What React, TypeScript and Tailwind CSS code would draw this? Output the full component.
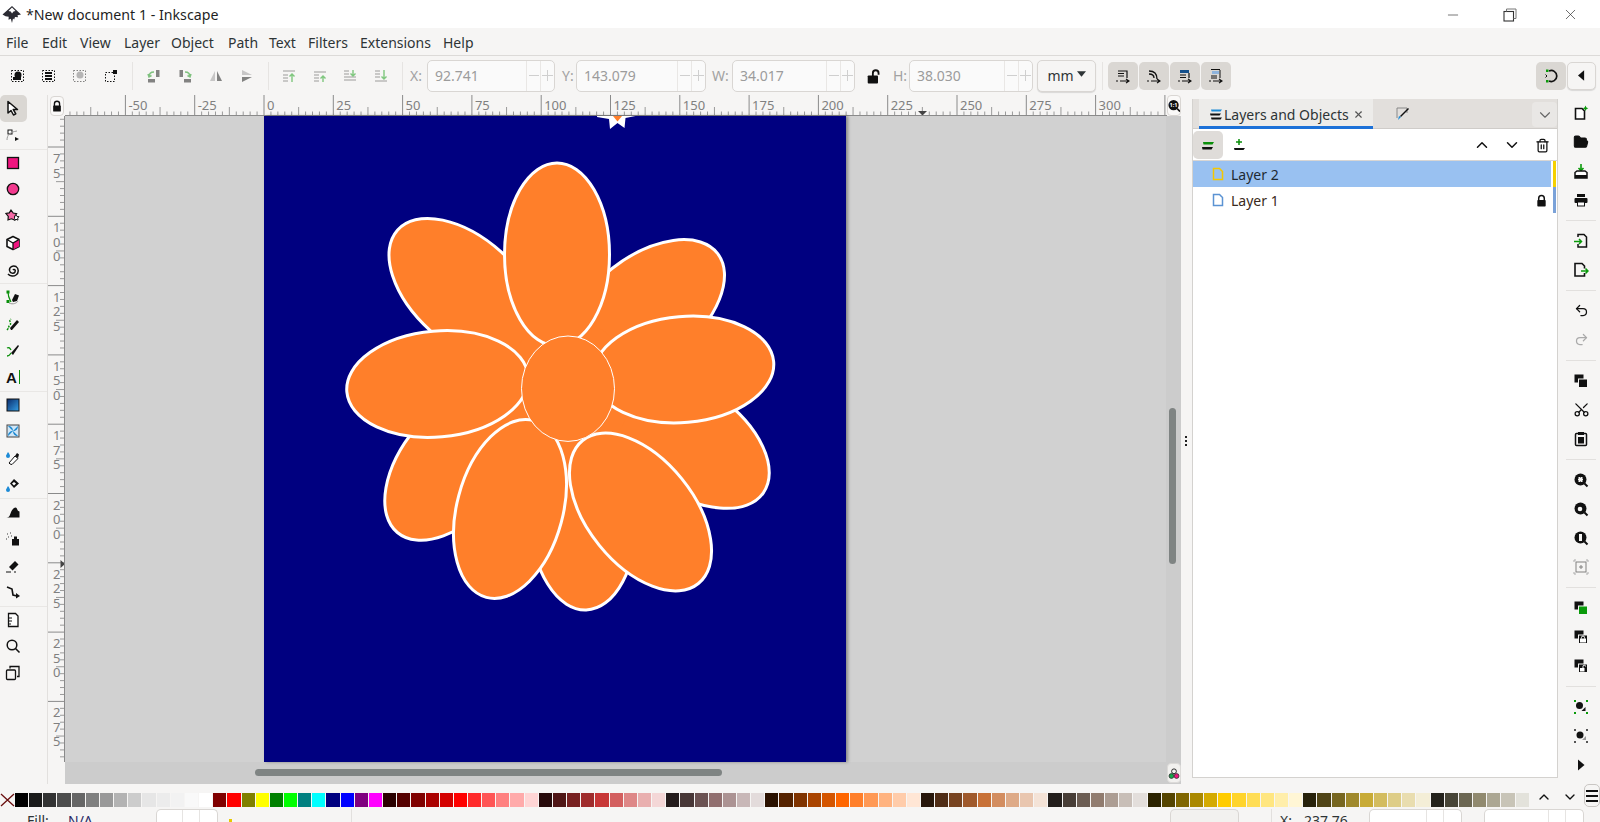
import type { ReactNode } from 'react'
import { Minus, X, ChevronDown, ChevronUp, Trash2, Scissors, Undo2, Redo2, FolderOpen } from 'lucide-react'

const FONT = "font-['Noto_Sans',sans-serif]"

const palette = [
  '000000', '1a1a1a', '333333', '4d4d4d', '666666', '808080', '999999', 'b3b3b3', 'cccccc', 'e6e6e6', 'ececec', 'f2f2f2', 'f9f9f9', 'ffffff',
  '800000', 'ff0000', '808000', 'ffff00', '008000', '00ff00', '008080', '00ffff', '000080', '0000ff', '800080', 'ff00ff',
  '2b0000', '550000', '800000', 'aa0000', 'd40000', 'ff0000', 'ff2a2a', 'ff5555', 'ff8080', 'ffaaaa', 'ffd5d5',
  '280b0b', '501616', '782121', 'a02c2c', 'c83737', 'd35f5f', 'de8787', 'e9afaf', 'f4d7d7',
  '241c1c', '483737', '6c5353', '916f6f', 'ac9393', 'c8b7b7', 'e3dbdb',
  '2b1100', '552200', '803300', 'aa4400', 'd45500', 'ff6600', 'ff7f2a', 'ff9955', 'ffb380', 'ffccaa', 'ffe6d5',
  '28170b', '502d16', '784421', 'a05a2c', 'c87137', 'd38d5f', 'deaa87', 'e9c6af', 'f4e3d7',
  '241f1c', '483e37', '6c5d53', '917c6f', 'ac9d93', 'c8beb7', 'e3dedb',
  '2b2200', '554400', '806600', 'aa8800', 'd4aa00', 'ffcc00', 'ffd42a', 'ffdd55', 'ffe680', 'ffeeaa', 'fff6d5',
  '28220b', '504416', '786721', 'a0892c', 'c8ab37', 'd3bc5f', 'decd87', 'e9ddaf', 'f4eed7',
  '24221c', '484537', '6c6753', '918a6f', 'aca793', 'c8c4b7', 'e3e2db',
]

const menus = [
  { label: 'File', w: 'w-[36px]' },
  { label: 'Edit', w: 'w-[38px]' },
  { label: 'View', w: 'w-[44px]' },
  { label: 'Layer', w: 'w-[47px]' },
  { label: 'Object', w: 'w-[57px]' },
  { label: 'Path', w: 'w-[41px]' },
  { label: 'Text', w: 'w-[39px]' },
  { label: 'Filters', w: 'w-[52px]' },
  { label: 'Extensions', w: 'w-[83px]' },
  { label: 'Help', w: 'w-[40px]' },
]

function Ico({ children, size = 'w-4 h-4', dim }: { children: ReactNode; size?: string; dim?: boolean }) {
  return (
    <svg viewBox="0 0 16 16" className={`${size} ${dim ? 'opacity-50' : ''}`} fill="none">
      {children}
    </svg>
  )
}

function Padlock({ open, size = 'w-[14px] h-[14px]' }: { open?: boolean; size?: string }) {
  return (
    <svg viewBox="0 0 14 14" className={size} fill="none">
      {open ? (
        <path d="M6 7V4.500a2.500 2.500 0 015 0V6" stroke="#111" strokeWidth="1.600" />
      ) : (
        <path d="M4 7V4.500a3 3 0 016 0V7" stroke="#111" strokeWidth="1.600" />
      )}
      <rect x={open ? 1.500 : 2.500} y="6.500" width="9" height="7" rx="0.800" fill="#111" />
    </svg>
  )
}

const dotted = <rect x="1.500" y="2.500" width="12" height="11" stroke="#111" strokeDasharray="1.500 1.500" />

// left tools
const tools: { icon: ReactNode; sep?: boolean; active?: boolean }[] = [
  { active: true, icon: <Ico><path d="M3 1.500v11.500l3-2.500 2.500 4.500 2.300-1.200-2.500-4.300h4.200z" fill="#fff" stroke="#111" strokeWidth="1.500" strokeLinejoin="round" /></Ico> },
  { icon: <Ico><rect x="3" y="3" width="4" height="4" fill="#fff" stroke="#111" /><path d="M2 13c0-5 3-8 10-9" stroke="#999" /><path d="M10 10l4 2-4 2z" fill="#111" /></Ico> },
  { sep: true, icon: <Ico><rect x="2.500" y="2.500" width="11" height="11" fill="#f0147f" stroke="#111" strokeWidth="1.300" /></Ico> },
  { icon: <Ico><circle cx="8" cy="8" r="5.700" fill="#f23a8e" stroke="#111" strokeWidth="1.300" /></Ico> },
  { icon: <Ico><path d="M6 2l2.200 3 3.400.6-2 3 .2 3.400-3.300-1.200L3 12l.3-3.600L1 5.500l3.300-.6z" fill="#f56aa6" stroke="#111" strokeWidth="1.200" /><path d="M11 7l1 1.500 2 .2-1.300 1.400.3 2-2-.8-1.600.8" fill="#fff" stroke="#111" /></Ico> },
  { icon: <Ico><path d="M8 1.500l6 3v7l-6 3-6-3v-7z" fill="#fff" stroke="#111" strokeWidth="1.600" strokeLinejoin="round" /><path d="M8 8l6-3.500v7L8 14.500z" fill="#f0147f" /><path d="M2 4.500L8 8l6-3.500M8 8v6.500" stroke="#111" strokeWidth="1.300" /></Ico> },
  { icon: <Ico><path d="M8 8c1-1.500 3 0 2 2-1.300 2-5 1.500-5.500-1.500C4 5 8 3 11 4.500c3 2 3 6.500 0 8.500-2 1.500-6 1.500-8-1" stroke="#111" strokeWidth="1.500" /></Ico> },
  { sep: true, icon: <Ico><path d="M3 3c0 5 2 8 3 10" stroke="#0a8f0a" strokeWidth="1.200" /><rect x="1.500" y="1.500" width="3" height="3" fill="#0a8f0a" /><rect x="1.500" y="11" width="3" height="3" fill="#0a8f0a" /><path d="M7 11l3-6 4 1.500-2 5.500-4 1z" fill="#111" /><path d="M4 14c4 2 8 0 9-2" stroke="#999" /></Ico> },
  { icon: <Ico><path d="M6 14l-1-2 7-8 2 2-7 8z" fill="#111" /><path d="M2 14c2-2 1-3 3-5S3 5 6 3" stroke="#0a8f0a" strokeWidth="1.500" strokeDasharray="2 1" /></Ico> },
  { icon: <Ico><path d="M6 11l7-8 1 1-6 9z" fill="#111" /><path d="M2 14c3 0 3-2 4-3M2 6c2-1 3 0 4 2" stroke="#0a8f0a" strokeWidth="1.300" /></Ico> },
  { icon: <div className="flex items-center gap-[2px]"><span className="font-['Liberation_Sans',sans-serif] text-[15px] font-bold leading-none text-[#111]">A</span><span className="h-[14px] w-px bg-[#0a8f0a]" /></div> },
  { sep: true, icon: <Ico><rect x="2" y="2" width="12" height="12" fill="url(#gr)" stroke="#111" /><defs><linearGradient id="gr" x1="0" y1="0" x2="1" y2="1"><stop stopColor="#0a2a6a" /><stop offset="1" stopColor="#35a0e6" /></linearGradient></defs></Ico> },
  { icon: <Ico><rect x="2" y="2" width="12" height="12" fill="#cfe6f7" stroke="#444" /><path d="M8 8L3 3c3 0 5 2 5 5zM8 8l5-5c0 3-2 5-5 5zM8 8l5 5c-3 0-5-2-5-5zM8 8l-5 5c0-3 2-5 5-5z" fill="#1585d0" /></Ico> },
  { icon: <Ico><path d="M3 2c1.500 2 2 3 2 4a2 2 0 01-4 0c0-1 1-2 2-4z" fill="#1c8ad6" /><path d="M5 14l-1-1 6-7 3 2.500-6 6z" fill="#fff" stroke="#111" /><path d="M10 6l2-3 2 1.500-1 3.500z" fill="#111" /></Ico> },
  { icon: <Ico><path d="M3 9c1.500 2 2 3 2 4a2 2 0 01-4 0c0-1 1-2 2-4z" fill="#1c8ad6" /><path d="M9 2l5 4.500-5 4.500-4-4.500z" fill="#111" /><path d="M9 5l2 1.500-2 2-2-2z" fill="#fff" /></Ico> },
  { sep: true, icon: <Ico><path d="M1.500 13.500c2 0 3-1 4-4 1-3 3-6 5-6s1.500 4 4 4v6z" fill="#111" /></Ico> },
  { icon: <Ico><rect x="7" y="8" width="7" height="6.500" fill="#111" /><rect x="9" y="5.500" width="3" height="2.500" fill="#111" /><path d="M2 3h1M5 2h1M3 6h1M6 5h1M1 8h1" stroke="#777" strokeWidth="1.300" /></Ico> },
  { icon: <Ico><path d="M4 9l6-6 3.500 3.500-6 6z" fill="#111" /><path d="M1 14h5M9 14h2" stroke="#111" /></Ico> },
  { icon: <Ico><path d="M2 3l5 2 1 6 4 1" stroke="#111" strokeWidth="1.600" /><path d="M11 9l4 3-4 2.500z" fill="#111" /></Ico> },
  { sep: true, icon: <Ico><path d="M3.500 1.500h7l2.500 2.500v10.500h-9.500z" fill="#fff" stroke="#111" strokeWidth="1.300" /><path d="M4 6h3M4 9h3M4 12h2" stroke="#111" /></Ico> },
  { icon: <Ico><circle cx="7" cy="7" r="4.800" stroke="#111" strokeWidth="1.500" /><path d="M10.500 10.500l4 4" stroke="#111" strokeWidth="1.600" /></Ico> },
  { icon: <Ico><rect x="1.500" y="5" width="9" height="9.500" rx="1" fill="#f6f5f4" stroke="#111" strokeWidth="1.300" /><path d="M5 3.500V1.500h9v10h-2" stroke="#111" strokeWidth="1.300" /></Ico> },
]

const stacked = (front: ReactNode) => (
  <Ico>
    <rect x="1.500" y="1.500" width="9" height="8" fill="#111" />
    {front}
  </Ico>
)

const magnifier = (inner: ReactNode) => (
  <Ico>
    <circle cx="7.500" cy="7.500" r="6" fill="#111" />
    {inner}
    <path d="M11.500 11.500l3 3" stroke="#111" strokeWidth="2" />
  </Ico>
)

// right commands, grouped by separators
const commands: ReactNode[][] = [
  [
    <Ico key="n"><path d="M2.500 3.500h6.500l2.500 2.500V14h-9z" fill="#fff" stroke="#111" strokeWidth="1.600" /><path d="M12.500 0.500l.9 1.900 1.900.9-1.900.9-.9 1.900-.9-1.900-1.900-.9 1.900-.9z" fill="#0a9a0a" /></Ico>,
    <FolderOpen key="o" className="h-4 w-4 fill-[#111] text-[#111]" strokeWidth={1.600} />,
    <Ico key="s"><path d="M8 1v6M5.500 5L8 7.500 10.500 5" stroke="#0a9a0a" strokeWidth="1.600" /><path d="M2 9.500l2-1.500h8l2 1.500V15H2z" fill="#fff" stroke="#111" strokeWidth="1.500" /><rect x="2" y="12" width="12" height="3" fill="#111" /></Ico>,
    <Ico key="p"><rect x="4" y="2" width="8" height="3" fill="#111" /><rect x="1.500" y="6" width="13" height="5" rx="1" fill="#111" /><rect x="4.500" y="10" width="7" height="4" fill="#fff" stroke="#111" /></Ico>,
  ],
  [
    <Ico key="i"><path d="M5 4V1.500h6l2.500 2.500v10H5v-3" stroke="#111" strokeWidth="1.500" /><path d="M1 8.500h7M6 6l2.500 2.500L6 11" stroke="#0a9a0a" strokeWidth="1.500" /></Ico>,
    <Ico key="e"><path d="M11.500 6.500V4L9 1.500H2v12.500h9.500v-3" stroke="#111" strokeWidth="1.600" /><path d="M8 9h7M12.500 6.500L15 9l-2.500 2.500" stroke="#0a9a0a" strokeWidth="1.500" /></Ico>,
  ],
  [
    <Undo2 key="u" className="h-[15px] w-[15px] text-[#111]" strokeWidth={2} />,
    <Redo2 key="r" className="h-[15px] w-[15px] text-[#aaa]" strokeWidth={2} />,
  ],
  [
    stacked(<rect x="5.500" y="6" width="9" height="8.500" fill="#111" stroke="#f6f5f4" />),
    <Scissors key="c" className="h-[17px] w-[17px] rotate-[-90deg] text-[#111]" strokeWidth={1.800} />,
    <Ico key="v"><rect x="2.500" y="2.500" width="11" height="12" rx="1" stroke="#111" strokeWidth="1.500" /><rect x="5" y="1" width="6" height="3" fill="#111" /><rect x="5" y="6" width="6" height="6.500" fill="#111" /></Ico>,
  ],
  [
    magnifier(<rect x="5" y="5" width="5" height="5" fill="#f6f5f4" stroke="#111" strokeDasharray="1 1" />),
    magnifier(<circle cx="7" cy="8" r="2.300" fill="#f6f5f4" />),
    magnifier(<rect x="5.500" y="3.500" width="4" height="8" fill="#f6f5f4" stroke="#111" />),
    <Ico key="f" dim><rect x="3" y="3" width="10" height="10" stroke="#111" /><path d="M8 6v4M6 8h4" stroke="#111" /><path d="M1 3V1h2M13 1h2v2M15 13v2h-2M3 15H1v-2" stroke="#666" /></Ico>,
  ],
  [
    stacked(<rect x="5.500" y="6" width="9" height="8.500" fill="#0a9a0a" stroke="#f6f5f4" />),
    stacked(<><rect x="5.500" y="6" width="9" height="8.500" fill="#111" stroke="#f6f5f4" /><rect x="7" y="9.500" width="6" height="4" fill="#fff" /><path d="M8.500 9.500V8.500a1.500 1.500 0 013 0v1" stroke="#fff" /></>),
    stacked(<><rect x="5.500" y="6" width="9" height="8.500" fill="#111" stroke="#f6f5f4" /><rect x="7" y="10" width="4.500" height="3.500" fill="#fff" /><path d="M10 10V8.500a1.300 1.300 0 012.600 0" stroke="#fff" /></>),
  ],
  [
    <Ico key="g"><circle cx="6.500" cy="6.500" r="3.500" fill="#111" /><path d="M8.500 12h4V8z" fill="#111" /><path d="M1 1h2v2H1zM13 1h2v2h-2zM1 13h2v2H1zM13 13h2v2h-2z" fill="#0a9a0a" /></Ico>,
    <Ico key="h"><circle cx="7" cy="7" r="3.500" fill="#111" /><path d="M9 12h4V8z" fill="#999" /><path d="M1 1h2v2H1zM13 1h2v2h-2zM1 13h2v2H1zM13 13h2v2h-2z" fill="#555" /></Ico>,
    <Ico key="m"><path d="M5 2.500l6.500 5.500L5 13.500z" fill="#111" /></Ico>,
  ],
]

function TopIcon({ children, narrow }: { children: ReactNode; narrow?: boolean }) {
  return <div className={`flex h-[31px] items-center justify-center ${narrow ? 'w-[30.5px]' : 'w-[31px]'}`}>{children}</div>
}

function Sep() {
  return <div className="mx-[5.5px] h-[28px] w-px bg-[#e6e4e2]" />
}

function Field({ label, value, labelW, w }: { label: string; value: string; labelW: string; w: string }) {
  return (
    <>
      <div className={`${labelW} text-[14px] text-[#a2a2a2]`}>{label}</div>
      <div className={`${w} flex h-[32px] items-center rounded-[5px] border border-[#d9d6d3] bg-[#fafafa]`}>
        <div className="flex-1 pl-[7px] text-[14px] text-[#9c9c9c]">{value}</div>
        <div className="flex h-full w-[14px] items-center justify-center border-l border-[#e9e7e5]"><div className="h-px w-[10px] bg-[#cfcfcf]" /></div>
        <div className="relative flex h-full w-[14px] items-center justify-center border-l border-[#e9e7e5]">
          <div className="h-px w-[11px] bg-[#cfcfcf]" />
          <div className="absolute h-[11px] w-px bg-[#cfcfcf]" />
        </div>
      </div>
    </>
  )
}

function SnapBtn({ children }: { children: ReactNode }) {
  return <div className="flex h-[28px] w-[30px] items-center justify-center rounded-[5px] bg-[#dad7d3]">{children}</div>
}

const snapIcon = (c: ReactNode) => (
  <Ico>
    {c}
    <path d="M1 13h2M5 13h8M11 11l3 2-3 2" stroke="#111" strokeWidth="1.100" />
  </Ico>
)

function HRuler() {
  const ticks: ReactNode[] = []
  // 25 units = 69.3 px, zero sits 199 px into the strip
  for (let i = -30; i <= 160; i++) {
    const x = 199 + i * 6.93
    if (x < 0 || x > 1102) continue
    if (i % 10 === 0) {
      ticks.push(<line key={i} x1={x} x2={x} y1={0} y2={21} stroke="#8a8a8a" />)
      ticks.push(<text key={`t${i}`} x={x + 3} y={15} fontSize="13" fill="#808080">{i * 2.5}</text>)
    } else {
      ticks.push(<line key={i} x1={x} x2={x} y1={i % 5 === 0 ? 12 : 16.5} y2={21} stroke="#9a9a9a" />)
    }
  }
  return (
    <svg viewBox="0 0 1102 21" className={`h-[21px] w-[1102px] ${FONT}`}>
      {ticks}
      <path d="M853 16h9l-4.500 4.500z" fill="#444" />
      <line x1="0" x2="1102" y1="20.500" y2="20.500" stroke="#8a8a8a" />
    </svg>
  )
}

function VRuler() {
  const ticks: ReactNode[] = []
  // the 75 mark sits 31 px below the top of the strip
  for (let i = -4; i <= 89; i++) {
    const y = i * 6.93 + 31
    if (y < 0 || y > 646) continue
    const major = (i + 100) % 10 === 0
    const mid = (i + 100) % 5 === 0
    ticks.push(<line key={i} y1={y} y2={y} x1={major ? 0 : mid ? 8 : 12} x2={17} stroke={major ? '#8a8a8a' : '#9a9a9a'} />)
    if (major) {
      const value = String(75 + (i / 10) * 25)
      value.split('').forEach((d, n) => {
        ticks.push(<text key={`${i}-${n}`} x={5} y={y + 16 + n * 14.5} fontSize="13" fill="#808080">{d}</text>)
      })
    }
  }
  return (
    <svg viewBox="0 0 17 668" className={`h-[668px] w-[17px] shrink-0 ${FONT}`}>
      {ticks}
      <path d="M12.500 444l4.500 4-4.500 4z" fill="#444" />
      <line x1="16.500" x2="16.500" y1="0" y2="646" stroke="#8a8a8a" />
    </svg>
  )
}

function Flower() {
  const petal = { fill: '#ff7f2a', stroke: '#fff', strokeWidth: 3 }
  return (
    <svg viewBox="264 116 582 646" className="absolute inset-0 h-full w-full">
      <path d="M597 117l12 2 1 10 7.500-6 7 5 1-10 10-2v-4h-38z" fill="#fff" />
      <path d="M613 116h9l-4.500 5.500z" fill="#ff7f2a" />
      <ellipse cx="466" cy="291.500" rx="92" ry="53" transform="rotate(42 466 291.500)" {...petal} />
      <ellipse cx="645" cy="310" rx="92" ry="53" transform="rotate(-38 645 310)" {...petal} />
      <ellipse cx="688" cy="440" rx="92" ry="53" transform="rotate(35 688 440)" {...petal} />
      <ellipse cx="456.500" cy="462" rx="92" ry="53" transform="rotate(-50 456.500 462)" {...petal} />
      <ellipse cx="583" cy="518" rx="53" ry="92" transform="rotate(-2 583 518)" {...petal} />
      <ellipse cx="568" cy="389" rx="64" ry="70" fill="#ff7f2a" />
      <ellipse cx="557" cy="254.500" rx="52.500" ry="91.500" {...petal} />
      <ellipse cx="437.500" cy="384" rx="91" ry="53" transform="rotate(-5 437.500 384)" {...petal} />
      <ellipse cx="683.500" cy="369.500" rx="90.500" ry="53" transform="rotate(-5 683.500 369.500)" {...petal} />
      <ellipse cx="510" cy="509" rx="53" ry="91.500" transform="rotate(15 510 509)" {...petal} />
      <ellipse cx="640.500" cy="512" rx="53" ry="92" transform="rotate(-39 640.500 512)" {...petal} />
      <ellipse cx="568" cy="388.700" rx="46.500" ry="52.700" fill="#ff7f2a" stroke="#fff" strokeWidth="1" />
    </svg>
  )
}

function StatusBox({ w, cells }: { w: string; cells?: boolean }) {
  return (
    <div className={`${w} flex h-[20px] rounded-t-[5px] border border-b-0 border-[#d9d6d3] ${cells ? 'bg-white' : 'bg-[#f2f1ef]'}`}>
      <div className="flex-1" />
      {cells && <div className="w-[17px] border-l border-[#e6e4e2]" />}
      {cells && <div className="w-[18px] border-l border-[#e6e4e2]" />}
    </div>
  )
}

export default function App() {
  return (
    <div className={`flex h-[822px] w-[1600px] flex-col overflow-hidden bg-[#f6f5f4] ${FONT} text-[#2e3436]`}>
      {/* Title bar */}
      <div className="flex h-[28px] items-center bg-white pt-px">
        <svg viewBox="0 0 20 20" className="ml-[2px] h-[20px] w-[20px]">
          <path d="M10 1l9 8.500-3.500.8.500 2-3-.3-.8 2.500-1.200-1-1 4.500-1.200-4.200-2.300 1 .2-3-3.200-.5L0.500 9.500z" fill="#2b2b33" />
          <path d="M10 2.500l3.500 3.500-2 .5-1.500 2-1.200-2-2.300-.5z" fill="#fff" />
        </svg>
        <div className="ml-[4px] text-[14.2px] text-[#1f1f1f]">*New document 1 - Inkscape</div>
        <div className="ml-auto flex items-center text-[#333]">
          <Minus className="h-[16px] w-[16px]" strokeWidth={1} />
          <svg viewBox="0 0 14 14" className="ml-[42px] h-[14px] w-[14px]" fill="none">
            <rect x="1" y="3.500" width="9.500" height="9.500" stroke="#333" strokeWidth="1.100" />
            <path d="M3.500 3.500V1h9.500v9.500h-2.500" stroke="#777" strokeWidth="1" />
          </svg>
          <X className="ml-[45px] mr-[21px] h-[17px] w-[17px]" strokeWidth={1} />
        </div>
      </div>

      {/* Menu bar */}
      <div className="flex h-[28px] items-center border-b border-[#dcdad8] pl-[6px] pt-px text-[14px]">
        {menus.map(m => (
          <div key={m.label} className={m.w}>{m.label}</div>
        ))}
      </div>

      {/* Command bar */}
      <div className="flex h-[39px] items-center pl-[2px]">
        <TopIcon><Ico>{dotted}<circle cx="8" cy="7" r="3.500" fill="#111" /><rect x="3" y="9" width="8" height="3" fill="#111" /></Ico></TopIcon>
        <TopIcon><Ico>{dotted}<path d="M4 5h7M4 8h7M4 11h7" stroke="#111" strokeWidth="1.800" /></Ico></TopIcon>
        <TopIcon><Ico dim>{dotted}<circle cx="8" cy="7" r="3.500" fill="#777" /></Ico></TopIcon>
        <TopIcon><Ico><rect x="2.500" y="4.500" width="9" height="9" stroke="#111" strokeDasharray="1.500 1.500" /><rect x="10" y="2" width="4" height="4" fill="#111" /></Ico></TopIcon>
        <Sep />
        <TopIcon><Ico dim><rect x="2" y="11" width="7" height="3.500" fill="#111" /><rect x="10" y="2" width="3.500" height="7" fill="#111" /><path d="M3 9c0-3 2-5 5-5M2 6l1 3 2.500-1.500" stroke="#0a8f0a" strokeWidth="1.500" /></Ico></TopIcon>
        <TopIcon><Ico dim><rect x="7" y="11" width="7" height="3.500" fill="#111" /><rect x="2.500" y="2" width="3.500" height="7" fill="#111" /><path d="M13 9c0-3-2-5-5-5M14 6l-1 3-2.500-1.500" stroke="#0a8f0a" strokeWidth="1.500" /></Ico></TopIcon>
        <TopIcon><Ico dim><path d="M7 3v10L2 13z" fill="#999" /><path d="M9 3v10l5 0z" fill="#111" /></Ico></TopIcon>
        <TopIcon><Ico dim><path d="M3 7h10L3 2z" fill="#999" /><path d="M3 9h10L3 14z" fill="#111" /></Ico></TopIcon>
        <Sep />
        <TopIcon narrow><Ico dim><path d="M2 3h12M2 7h5M2 10h5M2 13h5" stroke="#444" strokeWidth="1.200" /><path d="M11 14V6M8.500 8.500L11 6l2.500 2.500" stroke="#0a9a0a" strokeWidth="1.400" /></Ico></TopIcon>
        <TopIcon narrow><Ico dim><path d="M2 4h12M2 7h5M2 10h5M2 13h5" stroke="#444" strokeWidth="1.200" /><path d="M11 14V8M8.500 10.500L11 8l2.500 2.500" stroke="#0a9a0a" strokeWidth="1.400" /></Ico></TopIcon>
        <TopIcon narrow><Ico dim><path d="M2 3h5M2 6h5M2 9h12M2 12h12" stroke="#444" strokeWidth="1.200" /><path d="M11 2v6M8.500 5.500L11 8l2.500-2.500" stroke="#0a9a0a" strokeWidth="1.400" /></Ico></TopIcon>
        <TopIcon narrow><Ico dim><path d="M2 3h5M2 6h5M2 9h5M2 13h12" stroke="#444" strokeWidth="1.200" /><path d="M11 2v9M8.500 8.500L11 11l2.500-2.500" stroke="#0a9a0a" strokeWidth="1.400" /></Ico></TopIcon>
        <Sep />
        <div className="w-[2px]" />
        <Field label="X:" value="92.741" labelW="w-[17px]" w="w-[128px]" />
        <div className="w-[7px]" />
        <Field label="Y:" value="143.079" labelW="w-[14px]" w="w-[130px]" />
        <div className="w-[6px]" />
        <Field label="W:" value="34.017" labelW="w-[20px]" w="w-[123px]" />
        <div className="flex w-[38px] justify-center"><Padlock open size="h-[16px] w-[16px]" /></div>
        <Field label="H:" value="38.030" labelW="w-[16px]" w="w-[124px]" />
        <div className="ml-[4px] flex h-[32px] w-[59px] items-center justify-center gap-[3px] rounded-[5px] border border-[#d9d6d3] bg-[#f6f5f4] text-[14px] shadow-[0_1px_1px_rgba(0,0,0,0.12)]">
          mm
          <svg viewBox="0 0 10 6" className="mb-[3px] h-[6px] w-[9px]"><path d="M0 0h10L5 6z" fill="#2e3436" /></svg>
        </div>
        <Sep />
        <div className="flex gap-px">
          <SnapBtn>{snapIcon(<path d="M3 3h9v7M3 5.500h6M3 8h6" stroke="#111" strokeWidth="1.200" />)}</SnapBtn>
          <SnapBtn>{snapIcon(<path d="M3 3c5 0 8 2 8 8M3 6c3 0 5 1 5 4" stroke="#111" strokeWidth="1.300" />)}</SnapBtn>
          <SnapBtn>{snapIcon(<><rect x="3" y="2" width="9" height="3" fill="#14508c" /><path d="M3 7h6M3 9.500h6M12 5v5" stroke="#111" strokeWidth="1.200" /></>)}</SnapBtn>
          <SnapBtn>{snapIcon(<><rect x="4" y="3" width="7" height="3" fill="#8fb4dc" /><path d="M3 8h6M3 10h6M12 2v8M3 1.500h9" stroke="#111" strokeWidth="1" /></>)}</SnapBtn>
        </div>
        <div className="ml-auto mr-[4px] flex gap-px">
          <SnapBtn>
            <Ico><path d="M6 3a5.500 5.500 0 110 10" stroke="#111" strokeWidth="1.700" /><rect x="3" y="1.500" width="2.500" height="2.500" fill="#0a9a0a" /><rect x="3" y="12" width="2.500" height="2.500" fill="#0a9a0a" /><path d="M2.500 6.500L4 8l-1.500 1.500" stroke="#111" /></Ico>
          </SnapBtn>
          <div className="flex h-[28px] w-[29px] items-center justify-center rounded-[5px] border border-[#d9d6d3] bg-[#f6f5f4] shadow-[0_1px_1px_rgba(0,0,0,0.12)]">
            <svg viewBox="0 0 8 12" className="h-[11px] w-[7px]"><path d="M7 0v12L0 6z" fill="#111" /></svg>
          </div>
        </div>
      </div>

      {/* Body */}
      <div className="flex h-[689px]">
        {/* Tool column */}
        <div className="flex w-[48px] shrink-0 flex-col border-r border-[#e2e0de]">
          {tools.map((t, i) => (
            <div key={i} className={`flex h-[26.9px] shrink-0 items-center justify-center pr-[21px] ${t.sep ? 'border-t border-[#e9e7e5]' : ''}`}>
              <div className={`flex h-[26.9px] w-[27px] shrink-0 items-center justify-center rounded-[5px] ${t.active ? 'bg-[#dad7d3]' : ''}`}>
                {t.icon}
              </div>
            </div>
          ))}
        </div>

        {/* Rulers and canvas */}
        <div className="flex w-[1133px] shrink-0 flex-col">
          <div className="flex h-[21px] shrink-0">
            <div className="flex h-[21px] w-[17px] shrink-0 items-center justify-center">
              <div className="flex h-[20px] w-[14px] items-center justify-center rounded-[4px] border border-[#d9d6d3] bg-[#faf9f8]">
                <Padlock size="h-[12px] w-[12px]" />
              </div>
            </div>
            <HRuler />
            <div className="flex h-[21px] w-[14px] items-center justify-center rounded-[4px] border border-[#d9d6d3] bg-[#faf9f8]">
              <svg viewBox="0 0 14 14" className="h-[13px] w-[13px]">
                <circle cx="6.500" cy="6.500" r="6" fill="#111" />
                <path d="M10.500 10.500L14 14" stroke="#111" strokeWidth="2" />
                <text x="6.500" y="9" fontSize="6.500" textAnchor="middle" fill="#fff" fontWeight="bold">1:1</text>
              </svg>
            </div>
          </div>
          <div className="flex h-[668px]">
            <VRuler />
            <div className="relative flex-1 bg-[#cccccc]">
              <div className="absolute left-0 top-0 h-[646px] w-[1101px] bg-[#d1d1d1]" />
              <div className="absolute left-[199px] top-0 h-[646px] w-[582px] bg-[#000080] shadow-[2px_0_3px_rgba(0,0,0,0.35)]">
                <Flower />
              </div>
              {/* Scrollbars */}
              <div className="absolute right-[5px] top-[292px] h-[156px] w-[7px] rounded-full bg-[#7f8483]" />
              <div className="absolute left-[190px] top-[653px] h-[7px] w-[467px] rounded-full bg-[#7f8483]" />
              <div className="absolute bottom-[1px] right-0 flex h-[20px] w-[14px] items-center justify-center rounded-[4px] border border-[#dcdad8] bg-[#f2f1ef]">
                <svg viewBox="0 0 14 14" className="h-[14px] w-[14px]">
                  <circle cx="7" cy="5" r="2.800" fill="none" stroke="#111" />
                  <circle cx="4" cy="10.500" r="2.800" fill="#14a84a" stroke="#333" />
                  <circle cx="10" cy="10.500" r="2.800" fill="#f0147f" stroke="#333" />
                </svg>
              </div>
            </div>
          </div>
        </div>

        {/* Dock */}
        <div className="relative w-[11px] shrink-0">
          <div className="absolute left-[4px] top-[341px] flex flex-col gap-[2px]">
            <div className="h-[2px] w-[2px] bg-[#222]" />
            <div className="h-[2px] w-[2px] bg-[#222]" />
            <div className="h-[2px] w-[2px] bg-[#222]" />
          </div>
        </div>
        <div className="mb-[6px] mt-[4px] flex w-[366px] shrink-0 flex-col border-x border-b border-[#d4d2cf] bg-white">
          <div className="flex h-[30px] items-start border-b border-[#cfccc9] bg-[#e2dfdc] pl-[6px]">
            <div className="flex h-[30px] w-[174px] items-center border-b-[3px] border-[#1c71d8] bg-[#edecea] pt-[3px]">
              <svg viewBox="0 0 16 16" className="ml-[9px] h-[16px] w-[16px]">
                <path d="M3 3.500h11l-1.500 2h-9z" fill="#1c8ad6" />
                <path d="M2 7.500h11l-1.500 2h-9z" fill="#111" />
                <path d="M3 11.500h11l-1.500 2h-9z" fill="#111" />
              </svg>
              <div className="text-[14px] text-[#2e3436]">Layers and Objects</div>
              <X className="ml-[4px] h-[11px] w-[11px] text-[#555]" strokeWidth={2.500} />
            </div>
            <div className="ml-[22px] mt-[7px]">
              <svg viewBox="0 0 16 16" className="h-[16px] w-[16px]">
                <path d="M2 2h10v5M2 2v10" stroke="#888" fill="none" />
                <path d="M14 3L6 11l-1-1 8-8z" fill="#111" />
                <path d="M6 11l-3 3 1-4z" fill="#1c8ad6" />
              </svg>
            </div>
            <div className="ml-auto mt-[3px] flex h-[25px] w-[25px] items-center justify-center rounded-[4px] bg-[#e9e7e5]">
              <ChevronDown className="h-[18px] w-[18px] text-[#666]" strokeWidth={1.500} />
            </div>
          </div>
          <div className="flex h-[32px] items-start border-b border-[#d8d6d4] pt-[2px]">
            <div className="flex h-[28px] w-[30px] items-center justify-center rounded-[5px] bg-[#dfdcd9]">
              <svg viewBox="0 0 16 16" className="h-[16px] w-[16px]">
                <path d="M3 5h11l-1.500 2.500h-9z" fill="#0a8f0a" />
                <path d="M2 10h11l-1.500 2.500h-9z" fill="#111" />
              </svg>
            </div>
            <div className="ml-[1px] flex h-[28px] w-[30px] items-center justify-center">
              <svg viewBox="0 0 16 16" className="h-[16px] w-[16px]">
                <path d="M8 2v6M5 5h6" stroke="#0a8f0a" strokeWidth="1.500" />
                <path d="M3 11h11l-1.500 2h-9z" fill="#111" />
              </svg>
            </div>
            <div className="ml-auto flex h-[28px] items-center text-[#111]">
              <div className="flex w-[30px] justify-center"><ChevronUp className="h-[18px] w-[18px]" strokeWidth={2} /></div>
              <div className="flex w-[30px] justify-center"><ChevronDown className="h-[18px] w-[18px]" strokeWidth={2} /></div>
              <div className="flex w-[30px] justify-center"><Trash2 className="h-[15px] w-[15px]" strokeWidth={2} /></div>
            </div>
          </div>
          <div className="flex h-[26px]">
            <div className="flex flex-1 items-center bg-[#99c1f1] pl-[19px] text-[14px] text-[#1f2a33]">
              <svg viewBox="0 0 12 14" className="mr-[7px] h-[14px] w-[12px]"><path d="M1.500 1.500h6l3 3v8h-9z" fill="none" stroke="#f5c800" strokeWidth="1.500" /></svg>
              Layer 2
            </div>
            <div className="ml-[2px] mr-[1px] w-[3px] bg-[#f5d000]" />
          </div>
          <div className="flex h-[26px]">
            <div className="flex flex-1 items-center pl-[19px] text-[14px] text-[#3a2a20]">
              <svg viewBox="0 0 12 14" className="mr-[7px] h-[14px] w-[12px]"><path d="M1.500 1.500h6l3 3v8h-9z" fill="#fff" stroke="#5b93d3" strokeWidth="1.500" /></svg>
              Layer 1
              <div className="ml-auto mr-[3px]"><Padlock size="h-[13px] w-[13px]" /></div>
            </div>
            <div className="ml-[2px] mr-[1px] w-[3px] bg-[#7ba2d8]" />
          </div>
        </div>

        {/* Command column */}
        <div className="flex w-[42px] shrink-0 flex-col items-center pl-[4px] pt-[3px]">
          {commands.map((group, g) => (
            <div key={g} className={`flex w-[30px] flex-col items-center ${g > 0 ? 'mt-[5.5px] border-t border-[#e2e0de] pt-[5.5px]' : ''}`}>
              {group.map((icon, i) => (
                <div key={i} className="flex h-[29px] items-center justify-center">{icon}</div>
              ))}
            </div>
          ))}
        </div>
      </div>

      {/* Palette */}
      <div className="flex h-[23px] shrink-0">
        <div className="flex items-start pt-[9px]">
          <svg viewBox="0 0 15 14" className="h-[14px] w-[15px]"><path d="M1 1l13 12M14 1L1 13" stroke="#6a0f0f" strokeWidth="1.300" /></svg>
          <div className="flex">
            {palette.map((c, i) => (
              <div key={i} className="h-[14px] w-[14.16px] border-r border-[#f6f5f4]" style={{ backgroundColor: `#${c}` }} />
            ))}
          </div>
        </div>
        <div className="ml-[6px] flex items-start pt-[5px] text-[#111]">
          <ChevronUp className="h-[16px] w-[16px]" strokeWidth={2} />
          <ChevronDown className="ml-[10px] h-[16px] w-[16px]" strokeWidth={2} />
        </div>
        <div className="ml-[6px] flex h-[23px] w-[16px] flex-col items-center justify-center gap-[3px] rounded-[5px] border border-[#c9c6c3] bg-[#f6f5f4]">
          <div className="h-[2px] w-[12px] bg-[#111]" />
          <div className="h-[2px] w-[12px] bg-[#111]" />
          <div className="h-[2px] w-[12px] bg-[#111]" />
        </div>
      </div>

      {/* Status bar */}
      <div className="flex h-[15px] shrink-0 items-start overflow-hidden pt-[2px] text-[14px]">
        <div className="ml-[27px] mt-[2px] w-[41px] leading-[20px]">Fill:</div>
        <div className="mt-[2px] w-[88px] leading-[20px] text-[#2a2a66]">N/A</div>
        <StatusBox w="w-[62px]" cells />
        <div className="ml-[11px] mt-[10px] h-[4px] w-[3px] bg-[#e6c800]" />
        <div className="ml-[119px] h-[15px] w-px bg-[#e2e0de]" />
        <div className="ml-[818px]"><StatusBox w="w-[69px]" /></div>
        <div className="ml-[32px] h-[15px] w-px bg-[#e2e0de]" />
        <div className="ml-[8px] mt-[2px] w-[24px] leading-[20px]">X:</div>
        <div className="mt-[2px] w-[65px] leading-[20px]">237.76</div>
        <StatusBox w="w-[93px]" cells />
        <div className="ml-[22px]"><StatusBox w="w-[100px]" cells /></div>
      </div>
    </div>
  )
}
